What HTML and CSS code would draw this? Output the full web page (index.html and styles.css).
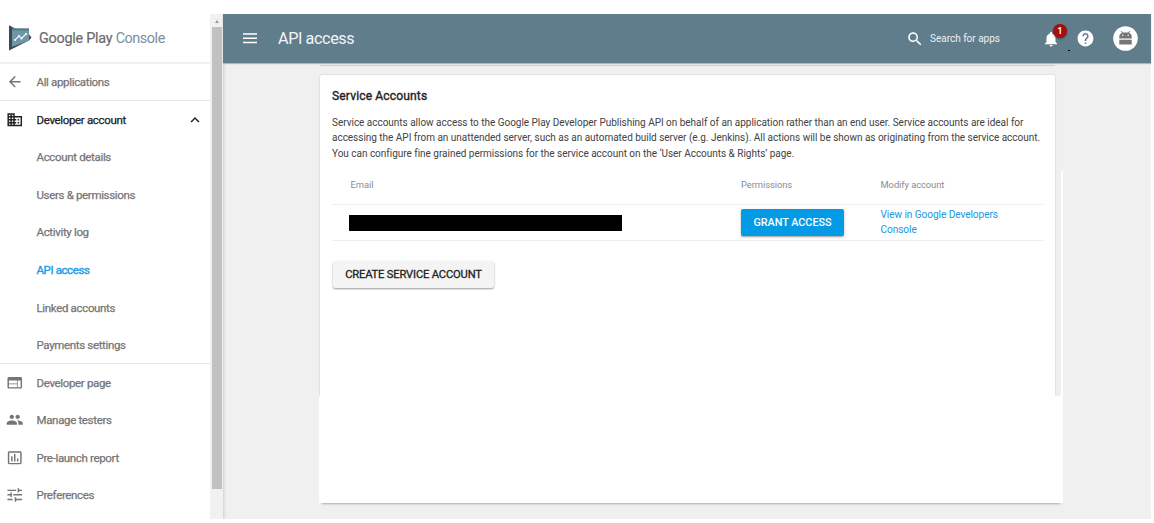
FILE: index.html
```
<!DOCTYPE html>
<html lang="en">
<head>
<meta charset="utf-8">
<title>Google Play Console</title>
<link rel="stylesheet" href="styles.css">
</head>
<body>
<div class="app">
  <aside class="sidebar">
    <div class="brand">
      <svg class="brand-logo" width="24" height="26" viewBox="0 0 24 26">
        <path d="M1 .5V25.500L21 15.500V10z" fill="#37474f"/>
        <path d="M4 3.500h17v12L4 22z" fill="#6f97a8"/>
        <path d="M4 3.500h17v2H4z" fill="#527c8c"/>
        <path d="M1 .5l3 1.500v20l-3 3.500z" fill="#3b4a52"/>
        <path d="M21 9.500l2.500 3-2.500 3z" fill="#37474f"/>
        <path d="M7 15l4-4 2.500 2.500L18 9" fill="none" stroke="#eef5f8" stroke-width="1.200"/>
        <g fill="#fff"><circle cx="7" cy="15" r="1"/><circle cx="11" cy="11" r="1"/><circle cx="13.500" cy="13.500" r="1"/><circle cx="18" cy="9" r="1"/></g>
      </svg>
      <span class="brand-name">Google Play <span class="brand-product">Console</span></span>
    </div>
    <nav class="nav">
      <a class="item ruled"><svg class="icon" viewBox="0 0 24 24"><path d="M20 11H7.830l5.590-5.590L12 4l-8 8 8 8 1.410-1.410L7.830 13H20v-2z"/></svg><span>All applications</span></a>
      <a class="item strong"><svg class="icon" viewBox="0 0 24 24"><path d="M12 7V3H2v18h20V7H12zM6 19H4v-2h2v2zm0-4H4v-2h2v2zm0-4H4V9h2v2zm0-4H4V5h2v2zm4 12H8v-2h2v2zm0-4H8v-2h2v2zm0-4H8V9h2v2zm0-4H8V5h2v2zm10 12h-8v-2h2v-2h-2v-2h2v-2h-2V9h8v10zm-2-8h-2v2h2v-2zm0 4h-2v2h2v-2z"/></svg><span>Developer account</span><svg class="chevron" viewBox="0 0 24 24"><path d="M12 8l-6 6 1.410 1.410L12 10.830l4.590 4.580L18 14z"/></svg></a>
      <a class="item sub">Account details</a>
      <a class="item sub">Users &amp; permissions</a>
      <a class="item sub">Activity log</a>
      <a class="item sub active">API access</a>
      <a class="item sub">Linked accounts</a>
      <a class="item sub ruled">Payments settings</a>
      <a class="item"><svg class="icon" viewBox="0 0 24 24"><path d="M20 4H4c-1.100 0-2 .9-2 2v12c0 1.100.9 2 2 2h16c1.100 0 2-.9 2-2V6c0-1.100-.9-2-2-2zm-5 14H4v-4h11v4zm0-5H4V9h11v4zm5 5h-4V9h4v9z"/></svg><span>Developer page</span></a>
      <a class="item"><svg class="icon" viewBox="0 0 24 24"><path d="M16 11c1.660 0 2.990-1.340 2.990-3S17.660 5 16 5s-3 1.340-3 3 1.340 3 3 3zm-8 0c1.660 0 2.990-1.340 2.990-3S9.660 5 8 5 5 6.340 5 8s1.340 3 3 3zm0 2c-2.330 0-7 1.170-7 3.500V19h14v-2.500c0-2.330-4.670-3.500-7-3.500zm8 0c-.29 0-.62.020-.97.050 1.160.84 1.970 1.970 1.970 3.450V19h6v-2.500c0-2.330-4.670-3.500-7-3.500z"/></svg><span>Manage testers</span></a>
      <a class="item"><svg class="icon" viewBox="0 0 24 24"><path d="M9 17H7v-7h2v7zm4 0h-2V7h2v10zm4 0h-2v-4h2v4zm2.500 2.100h-15V5h15v14.100zm0-16.100h-15c-1.100 0-2 .9-2 2v14c0 1.100.9 2 2 2h15c1.100 0 2-.9 2-2V5c0-1.100-.9-2-2-2z"/></svg><span>Pre-launch report</span></a>
      <a class="item"><svg class="icon" viewBox="0 0 24 24"><path d="M2 17.500v2h7v-2H2zM2 5v2h12V5H2zm12 16.500v-2h8v-2h-8v-2h-2v6h2zM6 9v2H2v2h4v2h2V9H6zm16 4v-2H10v2h12zm-6-4h2V7h4V5h-4V3h-2v6z"/></svg><span>Preferences</span></a>
    </nav>
  </aside>
  <div class="scrollbar"><span class="arrow"></span><span class="thumb"></span></div>
  <div class="main">
    <header class="topbar">
      <svg class="menu" width="14" height="11" viewBox="0 0 14 11"><path d="M0 1h14M0 5.300h14M0 9.600h14" stroke="#fff" stroke-width="1.500"/></svg>
      <h1 class="title">API access</h1>
      <div class="search">
        <svg width="18" height="18" viewBox="0 0 24 24" fill="#fff"><path d="M15.500 14h-.79l-.28-.27C15.410 12.590 16 11.110 16 9.500 16 5.910 13.090 3 9.500 3S3 5.910 3 9.500 5.910 16 9.500 16c1.610 0 3.090-.59 4.230-1.570l.27.280v.79l5 4.990L20.490 19l-4.990-5zm-6 0C7.010 14 5 11.990 5 9.500S7.010 5 9.500 5 14 7.010 14 9.500 11.990 14 9.500 14z"/></svg>
        <span>Search for apps</span>
      </div>
      <div class="alerts">
        <svg width="18" height="18" viewBox="0 0 24 24" fill="#fff"><path d="M12 22c1.100 0 2-.9 2-2h-4c0 1.100.89 2 2 2zm6-6v-5c0-3.070-1.640-5.640-4.500-6.320V4c0-.83-.67-1.500-1.500-1.500s-1.500.67-1.500 1.500v.68C7.630 5.360 6 7.920 6 11v5l-2 2v1h16v-1l-2-2z"/></svg>
        <span class="badge">1</span>
        <span class="dot"></span>
      </div>
      <svg class="help" width="19" height="19" viewBox="0 0 24 24" fill="#fff"><path d="M12 2C6.480 2 2 6.480 2 12s4.480 10 10 10 10-4.480 10-10S17.520 2 12 2zm1 17h-2v-2h2v2zm2.070-7.750l-.9.920C13.450 12.900 13 13.500 13 15h-2v-.5c0-1.100.45-2.100 1.170-2.830l1.240-1.260c.37-.36.59-.86.59-1.410 0-1.100-.9-2-2-2s-2 .9-2 2H8c0-2.210 1.790-4 4-4s4 1.790 4 4c0 .88-.36 1.680-.93 2.250z"/></svg>
      <svg class="avatar" width="25" height="25" viewBox="0 0 25 25"><circle cx="12.500" cy="12.500" r="12.300" fill="#fff"/><path d="M6.300 12.500V10.500Q6.300 7.500 9 6.900L7.700 5.400l.6-.5 1.700 1.700h5l1.700-1.700.6.500L16 6.900q2.700.6 2.700 3.600v2z" fill="#757575"/><path d="M6.300 13.700h12.400v4.800H6.300z" fill="#757575"/><circle cx="9.800" cy="9.300" r=".7" fill="#fff"/><circle cx="15.200" cy="9.300" r=".7" fill="#fff"/></svg>
    </header>
    <div class="content">
      <div class="previous-card"></div>
      <section class="card">
        <h2 class="heading">Service Accounts</h2>
        <p class="copy">Service accounts allow access to the Google Play Developer Publishing API on behalf of an application rather than an end user. Service accounts are ideal for<br>accessing the API from an unattended server, such as an automated build server (e.g. Jenkins). All actions will be shown as originating from the service account.<br>You can configure fine grained permissions for the service account on the ‘User Accounts &amp; Rights’ page.</p>
        <div class="table">
          <div class="row head"><span>Email</span><span>Permissions</span><span>Modify account</span></div>
          <div class="row body"><span class="redacted"></span><span><button class="btn primary">GRANT ACCESS</button></span><a class="link">View in Google Developers<br>Console</a></div>
        </div>
        <button class="btn neutral">CREATE SERVICE ACCOUNT</button>
      </section>
      <div class="side-strip"></div>
      <div class="card-foot"></div>
    </div>
  </div>
</div>
</body>
</html>
```
FILE: styles.css
```
* { box-sizing: border-box; }
body { margin: 0; background: #fff; font-family: Roboto, "Liberation Sans", sans-serif; overflow: hidden; }
.app { display: flex; width: 1150.5px; height: 519px; padding-top: 14px; }

.sidebar { width: 210px; flex: none; overflow: hidden; }
.brand { height: 49.5px; border-bottom: 2px solid #f0f0f0; display: flex; align-items: center; padding-left: 8px; }
.brand-logo { flex: none; }
.brand-name { margin-left: 7px; padding-top: 1.5px; font-size: 14.4px; letter-spacing: -.25px; color: #6b6b6b; -webkit-text-stroke: .2px; white-space: nowrap; }
.brand-product { color: #78909c; letter-spacing: -.45px; -webkit-text-stroke: 0; }
.item { height: 37.53px; display: flex; align-items: center; padding: .3px 0 0 6px; font-size: 11.5px; letter-spacing: -.34px; -webkit-text-stroke: .25px; color: #757575; white-space: nowrap; }
.item svg { stroke: none; }
.item.ruled { border-bottom: 1px solid #e6e6e6; }
.item.sub { padding-left: 36.5px; }
.item.strong { color: #212121; }
.item.active { color: #1a9be8; letter-spacing: -.4px; -webkit-text-stroke: .4px; }
.icon { width: 17.500px; height: 17.500px; margin-right: 13px; fill: currentColor; flex: none; }
.chevron { width: 18px; height: 18px; margin-left: auto; margin-right: 6px; fill: #212121; }

.scrollbar { width: 13px; flex: none; background: #f1f1f1; display: flex; flex-direction: column; align-items: center; }
.arrow { margin-top: 6px; border: 2.5px solid transparent; border-top: 0; border-bottom: 3px solid #9a9a9a; }
.thumb { margin-top: 4px; width: 10px; height: 462px; background: #c1c1c1; }

.main { flex: 1; background: #f0f0f0; box-shadow: inset 3px 0 3px -2px #ccc; }
.topbar { height: 49px; background: #607d8b; color: #fff; display: flex; align-items: center; padding: 0 13px 0 20px; position: relative; box-shadow: 0 1px 1px #b5b5b5; }
.title { margin: 0 0 0 21px; font-size: 16.2px; letter-spacing: -.4px; font-weight: 400; color: #f2f5f6; }
.search { margin-left: auto; display: flex; align-items: center; gap: 6px; font-size: 10.1px; letter-spacing: -.05px; color: #eceff1; white-space: nowrap; }
.alerts { margin-left: 42px; height: 18px; position: relative; }
.badge { position: absolute; left: 11px; top: -6px; width: 14px; height: 14px; border-radius: 50%; background: #a80d0d; font-size: 8.5px; font-weight: 700; line-height: 14px; text-align: center; box-shadow: 0 1px 2px rgba(0,0,0,.4); }
.dot { position: absolute; left: 26px; top: 20px; width: 1.500px; height: 1.500px; background: #000; }
.help { margin-left: 15.5px; }
.avatar { margin-left: 18px; }

.content { display: grid; grid-template-columns: 735px 8px; grid-template-rows: 12px 321px 107px; padding-left: 97px; }
.previous-card { height: 2px; box-shadow: 0 1px 1px #d0d0d0; grid-column: 1; }
.card { grid-column: 1; grid-row: 2; background: #fff; border-radius: 2px 2px 0 0; padding: 13px 12px 0; box-shadow: 0 0 2px rgba(0,0,0,.2); }
.side-strip { grid-column: 2; grid-row: 2; margin: 96px 0 0 6px; width: 2px; background: #fff; }
.card-foot { grid-column: 1 / 3; grid-row: 3; margin-left: -1px; background: #fff; box-shadow: 0 4px 2px -3px #aaa; position: relative; }
.heading { margin: 0; font-size: 12.1px; letter-spacing: .12px; line-height: 17px; font-weight: 400; -webkit-text-stroke: .35px; color: #212121; }
.copy { margin: 10px 0 0; font-size: 10px; letter-spacing: -.022px; line-height: 15.4px; color: #424242; white-space: nowrap; }
.table { margin-top: 4px; width: 711px; }
.row { display: grid; grid-template-columns: 409px 139.5px 1fr; align-items: center; border-bottom: 1px solid #ededed; }
.head { height: 39.5px; font-size: 9.4px; letter-spacing: -.07px; color: #8c8c8c; }
.head span:first-child { padding-left: 18.5px; }
.body { height: 36.5px; }
.redacted { margin-left: 17px; width: 272.5px; height: 16px; margin-top: 1px; background: #000; }
.link { font-size: 10.1px; letter-spacing: -.07px; line-height: 15.4px; color: #2196e3; }
.btn { display: block; border: 0; padding: 0; border-radius: 2px; font-family: inherit; font-weight: 500; white-space: nowrap; }
.primary { width: 103px; height: 27px; background: #039be5; color: #fff; font-size: 10.8px; box-shadow: 0 1px 2px rgba(0,0,0,.4); }
.neutral { margin: 20px 0 0 1px; width: 161px; height: 27px; background: #f4f4f4; color: #212121; font-size: 11.2px; letter-spacing: -.18px; font-weight: 400; -webkit-text-stroke: .3px; box-shadow: 0 1px 2px rgba(0,0,0,.4); }
```
